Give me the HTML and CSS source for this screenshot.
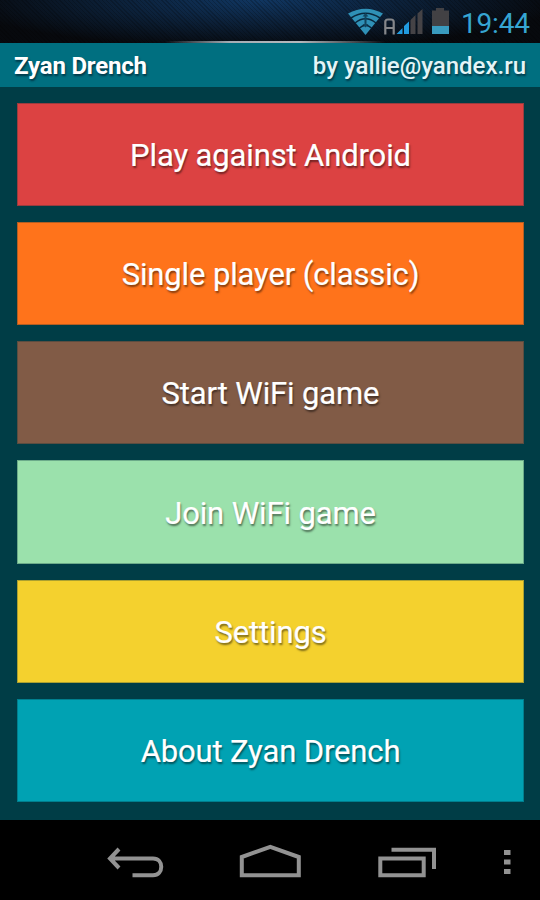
FILE: index.html
```
<!DOCTYPE html>
<html lang="en">
<head>
<meta charset="utf-8">
<title>Zyan Drench</title>
<link rel="stylesheet" href="styles.css">
</head>
<body>
<div class="phone">
  <div class="status">
    <svg class="status-icons" width="106" height="43" viewBox="0 0 106 43">
      <path d="M0 13.500Q17.500 4 35 13.500L17.500 35Z" fill="#2f91b7"/>
      <path d="M3 18Q17.500 8.500 32 18M7 23Q17.500 14.500 28 23M11.500 28Q17.500 22.500 23.500 28" fill="none" stroke="#09283d" stroke-width="1.500"/>
      <path d="M17.500 13L20.500 16.500H18.500V24H20.500L17.500 27.500L14.500 24H16.500V16.500H14.500Z" fill="#12455f"/>
      <path d="M37.300 34.500V22Q37.300 19.500 40 19.500H43Q45.700 19.500 45.700 22V34.500M37.300 28H45.700" fill="none" stroke="#85878b" stroke-width="2.200"/>
      <path d="M48.500 34L54.500 28V34Z M56 34V26L61 21.500V34Z" fill="#219be0"/>
      <path d="M62.500 34V20L67.500 15V34Z M69.500 34V13.500L74.500 9V34Z" fill="#454346"/>
      <path d="M84 10.500H88V8H96V10.500H101V34H84Z" fill="#424144"/>
      <path d="M84 26H101V34H84Z" fill="#399bbf"/>
    </svg>
    <span class="clock">19:44</span>
  </div>
  <header class="title-bar"><span class="name">Zyan Drench</span><span class="author">by yallie@yandex.ru</span></header>
  <main class="menu">
    <button class="item red">Play against Android</button>
    <button class="item orange">Single player (classic)</button>
    <button class="item brown">Start WiFi game</button>
    <button class="item green">Join WiFi game</button>
    <button class="item yellow">Settings</button>
    <button class="item teal">About Zyan Drench</button>
  </main>
  <nav class="nav">
    <svg width="540" height="80" viewBox="0 0 540 80" fill="none" stroke="#929292" stroke-width="4">
      <path d="M119 29L110 38.500L119 48M110 38.500H153C164 38.500 164 55.200 153 55.200H132.500"/>
      <path d="M241.800 55.200V37L270.300 26.800L298.800 37V55.200Z"/>
      <path d="M380.300 38.500H423.700V55.200H380.300ZM391.500 29.800H434V49"/>
      <path d="M504 30H510.500V35H504ZM504 39.500H510.500V44.500H504ZM504 49H510.500V54H504Z" fill="#929292" stroke="none"/>
    </svg>
  </nav>
</div>
</body>
</html>
```
FILE: styles.css
```
* { box-sizing: border-box; }
body { margin: 0; background: #000; font-family: Roboto, "Liberation Sans", sans-serif; }
.phone { width: 540px; height: 900px; display: flex; flex-direction: column; background: #003d46; }
.status {
  height: 43px; display: flex; justify-content: flex-end; padding-right: 10px;
  background:
    linear-gradient(90deg, transparent 165px, #a5adb5 230px, #b5b8bc 300px, transparent 385px) bottom / 100% 2px no-repeat,
    repeating-linear-gradient(45deg, rgba(0,0,0,.2) 0 1px, transparent 1px 3px),
    radial-gradient(ellipse 300px 48px at 260px 0, #103661, transparent),
    #07090d;
}
.status-icons { flex: none; margin-right: 7px; }
.clock { width: 69px; font-size: 28px; line-height: 47px; letter-spacing: -.2px; color: #36a5d2; white-space: nowrap; }
.title-bar {
  height: 44px; padding: 1px 14px 0; display: flex; align-items: center; justify-content: space-between;
  background: #006f80; color: #fff; font-size: 24px; line-height: 44px; white-space: nowrap;
  text-shadow: 1px 2px 2px rgba(0,20,35,.6);
}
.name { font-weight: 700; letter-spacing: -.2px; }
.author { font-weight: 500; color: #e4f5f7; }
.menu { height: 733px; padding: 15.500px 16px 17.500px 17px; display: flex; flex-direction: column; gap: 16px; }
.item {
  flex: 1; border: 1px solid rgba(0,45,55,.3); padding: 3px 0 0; color: #fff;
  font: 400 31px/36px Roboto, "Liberation Sans", sans-serif; letter-spacing: -.13px;
  text-shadow: 1px 2px 2px rgba(0,0,0,.5);
  -webkit-text-stroke: .2px #fff;
  display: flex; align-items: center; justify-content: center; white-space: nowrap;
}
.red { background: #dc4242; }
.orange { background: #ff731b; }
.brown { background: #815b46; }
.green { background: #9be1ac; }
.yellow { background: #f4d12e; }
.teal { background: #00a2b3; }
.nav { height: 80px; background: #000; }
.nav svg { display: block; }
```
